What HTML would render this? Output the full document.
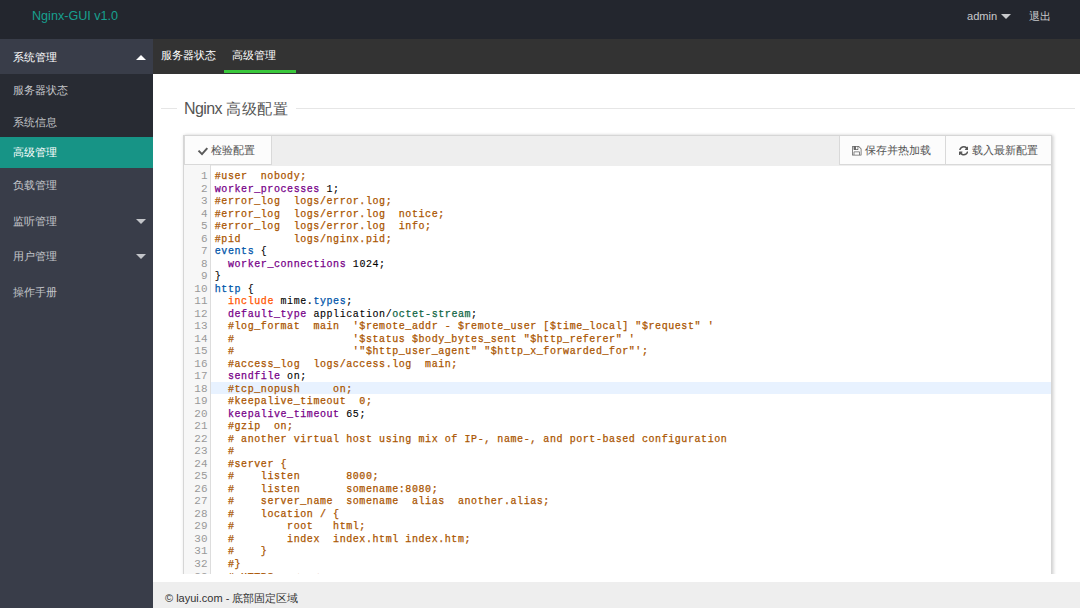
<!DOCTYPE html>
<html><head><meta charset="utf-8">
<style>
*{margin:0;padding:0;box-sizing:border-box}
i,b{font-style:normal;font-weight:normal}
html,body{width:1080px;height:608px;overflow:hidden;background:#fff;font-family:"Liberation Sans",sans-serif;position:relative}
.abs{position:absolute}
#hdr{left:0;top:0;width:1080px;height:39px;background:#23262e}
#logo{left:32px;top:4px;font-size:12.6px;line-height:24px;color:#17a08f;white-space:nowrap}
#admin{left:967px;top:4px;font-size:11.1px;line-height:24px;color:#c8c9cc;white-space:nowrap}
#logout{left:1029px;top:4px;font-size:11px;line-height:24px;color:#c8c9cc;white-space:nowrap}
.tri-d{width:0;height:0;border-left:5px solid transparent;border-right:5px solid transparent;border-top:5px solid #c8c9cc}
.tri-u{width:0;height:0;border-left:5px solid transparent;border-right:5px solid transparent;border-bottom:5px solid #fff}
#side{left:0;top:39px;width:153px;height:569px;background:#393d49}
.nav{position:absolute;left:0;width:153px;font-size:10.8px;color:#c3c5c9;white-space:nowrap}
.nav span{position:absolute;left:13px}
#tabs{left:153px;top:39px;width:927px;height:34.5px;background:#333}
.tab{position:absolute;font-size:10.8px;color:#fff;white-space:nowrap}
#foot{left:153px;top:582px;width:927px;height:27px;background:#eee}
#foottxt{left:165px;top:591px;font-size:11px;line-height:14px;color:#333;white-space:nowrap}
#legend-line1{left:161px;top:108px;width:16px;height:1px;background:#e6e6e6}
#legend-line2{left:296px;top:108px;width:779px;height:1px;background:#e6e6e6}
#legend{left:184px;top:99px;font-size:15px;line-height:20px;color:#555;white-space:nowrap;font-weight:300}
#clip{left:153px;top:74px;width:927px;height:500px;overflow:hidden}
#editor{left:29.5px;top:61px;width:869px;height:600px;border:1px solid #d6d6d6;box-shadow:2px 0 3px rgba(0,0,0,.13),0 0 3px rgba(0,0,0,.08);overflow:hidden;background:#fff}
#tb{left:0;top:0;width:868px;height:30px;background:#eee}
.btn{position:absolute;top:-1px;height:30px;background:#fcfcfc;border:1px solid #d9d9d9;font-size:10.8px;color:#555;white-space:nowrap}
.bt{position:absolute;top:7px;line-height:14px}
#gutter{left:0;top:29px;width:27.5px;height:600px;background:#f7f7f7;border-right:1px solid #ddd}
#code{left:0;top:33px;width:869px;font-family:"Liberation Mono",monospace;font-size:10.95px;line-height:12.52px}
.t{-webkit-text-stroke:0.1px currentColor}
.t i{-webkit-text-stroke:0.25px currentColor}
.ln{position:relative;height:12.52px;white-space:pre}
.ln .n{position:absolute;top:1px;left:0;width:24px;text-align:right;color:#999}
.ln .t{position:absolute;top:2px;left:31.3px;color:#000;font-size:10px;letter-spacing:0.57px}
.ln.act{background:linear-gradient(to right,transparent 27.3px,#e8f2ff 27.3px)}
.k{color:#708}.v{color:#05a}.s{color:#f50}.c{color:#a50}.g{color:#164}
</style></head><body>
<div id="hdr" class="abs"></div>
<div id="logo" class="abs">Nginx-GUI v1.0</div>
<div id="admin" class="abs">admin</div>
<div class="abs tri-d" style="left:1001px;top:14px"></div>
<div id="logout" class="abs">退出</div>

<div id="side" class="abs"></div>
<div class="nav" style="top:39px;height:35px;color:#fff"><span style="top:11.5px">系统管理</span></div>
<div class="abs tri-u" style="left:136px;top:55px"></div>
<div class="nav" style="top:74px;height:94px;background:#282b33"></div>
<div class="nav" style="top:74px;height:31px"><span style="top:9.5px">服务器状态</span></div>
<div class="nav" style="top:105.5px;height:31px"><span style="top:10px">系统信息</span></div>
<div class="nav" style="top:137px;height:31px;background:#179486;color:#fff"><span style="top:8.5px">高级管理</span></div>
<div class="nav" style="top:168px;height:35px"><span style="top:10.5px">负载管理</span></div>
<div class="nav" style="top:203px;height:35px"><span style="top:12px">监听管理</span></div>
<div class="abs tri-d" style="left:136px;top:219px;border-top-color:#c3c5c9"></div>
<div class="nav" style="top:238px;height:35px"><span style="top:11.5px">用户管理</span></div>
<div class="abs tri-d" style="left:136px;top:254px;border-top-color:#c3c5c9"></div>
<div class="nav" style="top:273px;height:35px"><span style="top:12.5px">操作手册</span></div>

<div id="tabs" class="abs"></div>
<div class="tab" style="left:161px;top:48.5px">服务器状态</div>
<div class="tab" style="left:232px;top:48.5px">高级管理</div>
<div class="abs" style="left:224px;top:70px;width:72px;height:3px;background:#3ac83c"></div>

<div id="legend-line1" class="abs"></div>
<div id="legend-line2" class="abs"></div>
<div id="legend" class="abs"><span style="font-size:16px;letter-spacing:-0.6px">Nginx</span> <span style="font-size:15px;letter-spacing:0.5px">高级配置</span></div>

<div id="clip" class="abs">
<div id="editor" class="abs">
  <div id="tb" class="abs"></div>
  <div class="btn" style="left:0;width:88px">
    <svg class="abs" style="left:12.5px;top:10px" width="12" height="10" viewBox="0 0 12 10"><polyline points="1.5,4.6 5,8.1 10.3,2.1" fill="none" stroke="#5a5a5a" stroke-width="2"/></svg>
    <span class="bt" style="left:26.5px">检验配置</span>
  </div>
  <div class="btn" style="left:655px;width:107px">
    <svg class="abs" style="left:12.5px;top:10px" width="9.5" height="9.5" viewBox="0 0 1536 1536"><path fill="#666" d="M384 1408h768v-384h-768v384zm896 0h128v-896q0-14-10-38.5t-20-34.5l-281-281q-10-10-34-20t-39-10v416q0 40-28 68t-68 28h-576q-40 0-68-28t-28-68v-416h-128v1280h128v-416q0-40 28-68t68-28h832q40 0 68 28t28 68v416zm-384-928v-320q0-13-9.5-22.5t-22.5-9.5h-192q-13 0-22.5 9.5t-9.5 22.5v320q0 13 9.5 22.5t22.5 9.5h192q13 0 22.5-9.5t9.5-22.5zm640 32v928q0 40-28 68t-68 28h-1344q-40 0-68-28t-28-68v-1344q0-40 28-68t68-28h928q40 0 88 20t76 48l280 280q28 28 48 76t20 88z"/></svg>
    <span class="bt" style="left:25.5px">保存并热加载</span>
  </div>
  <div class="btn" style="left:761px;width:107px">
    <svg class="abs" style="left:13px;top:10px" width="9.5" height="9.5" viewBox="0 0 1536 1536"><path fill="#555" d="M1511 928q0 5-1 7-64 268-268 434.5t-478 166.5q-146 0-282.5-55t-243.5-157l-129 129q-19 19-45 19t-45-19-19-45v-448q0-26 19-45t45-19h448q26 0 45 19t19 45-19 45l-137 137q71 66 161 102t187 36q134 0 250-65t186-179q11-17 53-117 8-23 30-23h192q13 0 22.5 9.5t9.5 22.5zm25-800v448q0 26-19 45t-45 19h-448q-26 0-45-19t-19-45 19-45l138-138q-148-137-349-137-134 0-250 65t-186 179q-11 17-53 117-8 23-30 23h-199q-13 0-22.5-9.5t-9.5-22.5v-7q65-268 270-434.5t480-166.5q146 0 284 55.5t245 156.5l130-129q19-19 45-19t45 19 19 45z"/></svg>
    <span class="bt" style="left:26px">载入最新配置</span>
  </div>
  <div id="gutter" class="abs"></div>
  <div id="code" class="abs">
<div class="ln"><b class="n">1</b><b class="t"><i class="c">#user  nobody;</i></b></div>
<div class="ln"><b class="n">2</b><b class="t"><i class="k">worker_processes</i> 1;</b></div>
<div class="ln"><b class="n">3</b><b class="t"><i class="c">#error_log  logs/error.log;</i></b></div>
<div class="ln"><b class="n">4</b><b class="t"><i class="c">#error_log  logs/error.log  notice;</i></b></div>
<div class="ln"><b class="n">5</b><b class="t"><i class="c">#error_log  logs/error.log  info;</i></b></div>
<div class="ln"><b class="n">6</b><b class="t"><i class="c">#pid        logs/nginx.pid;</i></b></div>
<div class="ln"><b class="n">7</b><b class="t"><i class="v">events</i> {</b></div>
<div class="ln"><b class="n">8</b><b class="t">  <i class="k">worker_connections</i> 1024;</b></div>
<div class="ln"><b class="n">9</b><b class="t">}</b></div>
<div class="ln"><b class="n">10</b><b class="t"><i class="v">http</i> {</b></div>
<div class="ln"><b class="n">11</b><b class="t">  <i class="s">include</i> mime.<i class="v">types</i>;</b></div>
<div class="ln"><b class="n">12</b><b class="t">  <i class="k">default_type</i> application/<i class="g">octet-stream</i>;</b></div>
<div class="ln"><b class="n">13</b><b class="t">  <i class="c">#log_format  main  &#x27;$remote_addr - $remote_user [$time_local] &quot;$request&quot; &#x27;</i></b></div>
<div class="ln"><b class="n">14</b><b class="t">  <i class="c">#                  &#x27;$status $body_bytes_sent &quot;$http_referer&quot; &#x27;</i></b></div>
<div class="ln"><b class="n">15</b><b class="t">  <i class="c">#                  &#x27;&quot;$http_user_agent&quot; &quot;$http_x_forwarded_for&quot;&#x27;;</i></b></div>
<div class="ln"><b class="n">16</b><b class="t">  <i class="c">#access_log  logs/access.log  main;</i></b></div>
<div class="ln"><b class="n">17</b><b class="t">  <i class="k">sendfile</i> on;</b></div>
<div class="ln act"><b class="n">18</b><b class="t">  <i class="c">#tcp_nopush     on;</i></b></div>
<div class="ln"><b class="n">19</b><b class="t">  <i class="c">#keepalive_timeout  0;</i></b></div>
<div class="ln"><b class="n">20</b><b class="t">  <i class="k">keepalive_timeout</i> 65;</b></div>
<div class="ln"><b class="n">21</b><b class="t">  <i class="c">#gzip  on;</i></b></div>
<div class="ln"><b class="n">22</b><b class="t">  <i class="c"># another virtual host using mix of IP-, name-, and port-based configuration</i></b></div>
<div class="ln"><b class="n">23</b><b class="t">  <i class="c">#</i></b></div>
<div class="ln"><b class="n">24</b><b class="t">  <i class="c">#server {</i></b></div>
<div class="ln"><b class="n">25</b><b class="t">  <i class="c">#    listen       8000;</i></b></div>
<div class="ln"><b class="n">26</b><b class="t">  <i class="c">#    listen       somename:8080;</i></b></div>
<div class="ln"><b class="n">27</b><b class="t">  <i class="c">#    server_name  somename  alias  another.alias;</i></b></div>
<div class="ln"><b class="n">28</b><b class="t">  <i class="c">#    location / {</i></b></div>
<div class="ln"><b class="n">29</b><b class="t">  <i class="c">#        root   html;</i></b></div>
<div class="ln"><b class="n">30</b><b class="t">  <i class="c">#        index  index.html index.htm;</i></b></div>
<div class="ln"><b class="n">31</b><b class="t">  <i class="c">#    }</i></b></div>
<div class="ln"><b class="n">32</b><b class="t">  <i class="c">#}</i></b></div>
<div class="ln"><b class="n">33</b><b class="t">  <i class="c"># HTTPS server</i></b></div>
<div class="ln"><b class="n">34</b><b class="t">  <i class="c">#</i></b></div>
  </div>
</div>
</div>

<div id="foot" class="abs"></div>
<div id="foottxt" class="abs">© layui.com - 底部固定区域</div>
</body></html>
